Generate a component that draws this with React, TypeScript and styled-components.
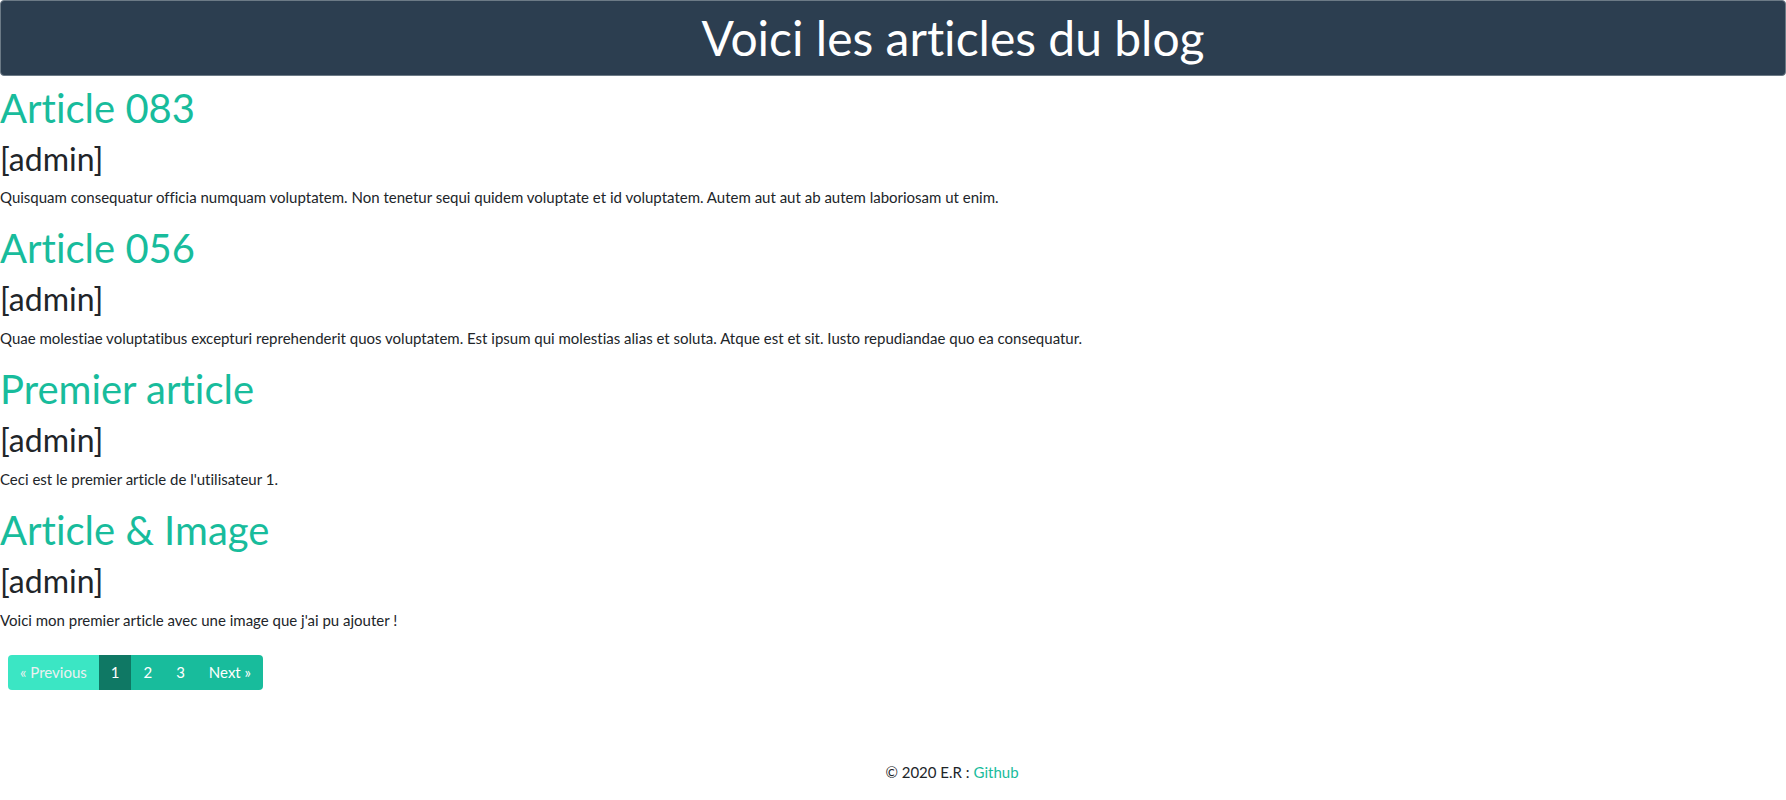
import styled, { createGlobalStyle } from "styled-components"

const GlobalStyle = createGlobalStyle`
  *, *::before, *::after { box-sizing: border-box; }
  body {
    margin: 0;
    font-family: Lato, "Noto Sans", sans-serif;
    font-size: 15px;
    line-height: 1.5;
    color: #212529;
    background: #fff;
    font-variant-ligatures: none;
  }
`

const Header = styled.header`
  background: #2c3e50;
  border: 1px solid #6c7a86;
  border-radius: 4px;
  padding: 8px 0 8px 120px;
  margin-bottom: 8px;
  text-align: center;
  h1 {
    margin: 0;
    font-size: 48px;
    font-weight: 400;
    line-height: 1.2;
    color: #fff;
  }
`

const ArticleBox = styled.article`
  h2 {
    margin: 0 0 8px;
    font-size: 40px;
    font-weight: 400;
    line-height: 1.2;
    color: #18bc9c;
  }
  h3 {
    margin: 0 0 8px;
    font-size: 32px;
    font-weight: 400;
    line-height: 1.2;
    color: #212529;
  }
  p {
    margin: 0 0 16px;
    font-size: 15px;
    line-height: 1.5;
  }
`

const PagerNav = styled.nav`
  padding: 8px 8px 9px;
`

const PagerList = styled.ul`
  display: flex;
  list-style: none;
  margin: 0;
  padding: 0;
  border-radius: 4px;
  overflow: hidden;
  width: max-content;
`

const PageLink = styled.li<{ $state?: "active" | "disabled" }>`
  padding: 8px 12px;
  line-height: 1.25;
  font-size: 15px;
  color: ${({ $state }) => ($state === "disabled" ? "#ecf0f1" : "#fff")};
  background: ${({ $state }) =>
    $state === "active" ? "#0f7864" : $state === "disabled" ? "#3be6c4" : "#18bc9c"};
`

const Footer = styled.footer`
  display: flex;
  justify-content: center;
  padding: 62px 0 0 118px;
  font-size: 15px;
  a {
    color: #18bc9c;
    text-decoration: none;
    margin-left: 4px;
  }
`

const articles = [
  {
    title: "Article 083",
    author: "admin",
    body: "Quisquam consequatur officia numquam voluptatem. Non tenetur sequi quidem voluptate et id voluptatem. Autem aut aut ab autem laboriosam ut enim.",
  },
  {
    title: "Article 056",
    author: "admin",
    body: "Quae molestiae voluptatibus excepturi reprehenderit quos voluptatem. Est ipsum qui molestias alias et soluta. Atque est et sit. Iusto repudiandae quo ea consequatur.",
  },
  {
    title: "Premier article",
    author: "admin",
    body: "Ceci est le premier article de l'utilisateur 1.",
  },
  {
    title: "Article & Image",
    author: "admin",
    body: "Voici mon premier article avec une image que j'ai pu ajouter !",
  },
]

export default function App() {
  return (
    <>
      <GlobalStyle />
      <Header>
        <h1>Voici les articles du blog</h1>
      </Header>
      {articles.map((a) => (
        <ArticleBox key={a.title}>
          <h2>{a.title}</h2>
          <h3>[{a.author}]</h3>
          <p>{a.body}</p>
        </ArticleBox>
      ))}
      <PagerNav>
        <PagerList>
          <PageLink $state="disabled">« Previous</PageLink>
          <PageLink $state="active">1</PageLink>
          <PageLink>2</PageLink>
          <PageLink>3</PageLink>
          <PageLink>Next »</PageLink>
        </PagerList>
      </PagerNav>
      <Footer>
        <span>© 2020 E.R :</span>
        <a href="#">Github</a>
      </Footer>
    </>
  )
}
